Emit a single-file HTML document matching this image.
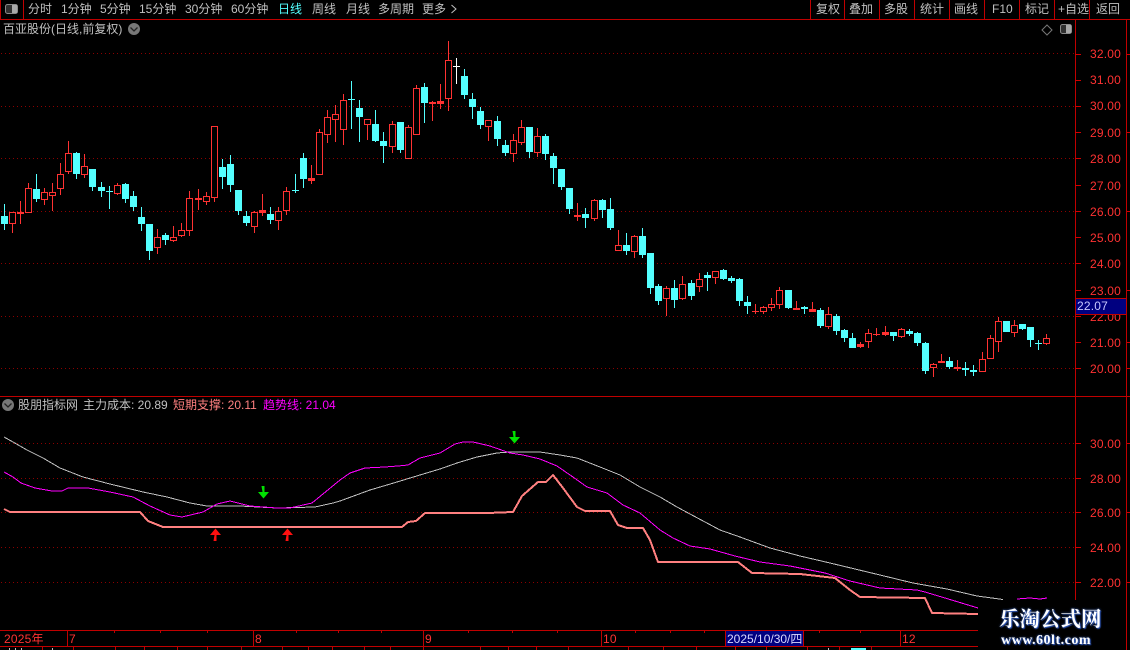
<!DOCTYPE html>
<html><head><meta charset="utf-8"><style>
html,body{margin:0;padding:0;background:#000;width:1130px;height:650px;overflow:hidden}
#r{position:relative;width:1130px;height:650px;background:#000;overflow:hidden;font:12px/14px "Liberation Sans","WenQuanYi Zen Hei","Noto Sans CJK SC",sans-serif;color:#c0c0c0}
#r span{position:absolute;white-space:nowrap}
svg{position:absolute;left:0;top:0}
.a{color:#ff3232;letter-spacing:.2px}
</style></head><body><div id="r">
<svg id="s" width="1130" height="650" viewBox="0 0 1130 650" shape-rendering="crispEdges">
<g fill="#c00000">
<rect x="0" y="19" width="1130" height="1"/>
<rect x="0" y="0" width="1" height="19"/>
<rect x="23" y="0" width="1" height="19"/>
<rect x="810" y="0" width="1" height="19"/><rect x="844" y="0" width="1" height="19"/><rect x="879" y="0" width="1" height="19"/><rect x="914" y="0" width="1" height="19"/><rect x="949" y="0" width="1" height="19"/><rect x="984" y="0" width="1" height="19"/><rect x="1019" y="0" width="1" height="19"/><rect x="1054" y="0" width="1" height="19"/><rect x="1089" y="0" width="1" height="19"/>
<rect x="1075" y="19" width="1" height="631"/>
<rect x="1126" y="19" width="1" height="631"/>
<rect x="0" y="396" width="1130" height="1"/>
<rect x="0" y="630" width="1075" height="1"/>
<rect x="0" y="646" width="1075" height="1"/>
<rect x="67" y="630" width="1" height="16"/><rect x="253" y="630" width="1" height="16"/><rect x="423" y="630" width="1" height="16"/><rect x="601" y="630" width="1" height="16"/><rect x="900" y="630" width="1" height="16"/>
<rect x="114" y="631" width="1" height="2"/><rect x="160" y="631" width="1" height="2"/><rect x="207" y="631" width="1" height="2"/><rect x="296" y="631" width="1" height="2"/><rect x="338" y="631" width="1" height="2"/><rect x="381" y="631" width="1" height="2"/><rect x="468" y="631" width="1" height="2"/><rect x="512" y="631" width="1" height="2"/><rect x="557" y="631" width="1" height="2"/><rect x="635" y="631" width="1" height="2"/><rect x="670" y="631" width="1" height="2"/><rect x="704" y="631" width="1" height="2"/><rect x="819" y="631" width="1" height="2"/><rect x="860" y="631" width="1" height="2"/>
<rect x="42" y="646" width="1" height="4"/><rect x="73" y="646" width="1" height="4"/><rect x="115" y="646" width="1" height="4"/><rect x="144" y="646" width="1" height="4"/><rect x="177" y="646" width="1" height="4"/><rect x="207" y="646" width="1" height="4"/><rect x="241" y="646" width="1" height="4"/><rect x="282" y="646" width="1" height="4"/><rect x="308" y="646" width="1" height="4"/><rect x="332" y="646" width="1" height="4"/><rect x="364" y="646" width="1" height="4"/><rect x="390" y="646" width="1" height="4"/><rect x="423" y="646" width="1" height="4"/><rect x="480" y="646" width="1" height="4"/><rect x="508" y="646" width="1" height="4"/><rect x="536" y="646" width="1" height="4"/><rect x="568" y="646" width="1" height="4"/><rect x="628" y="646" width="1" height="4"/><rect x="663" y="646" width="1" height="4"/><rect x="696" y="646" width="1" height="4"/><rect x="735" y="646" width="1" height="4"/><rect x="766" y="646" width="1" height="4"/><rect x="807" y="646" width="1" height="4"/><rect x="839" y="646" width="1" height="4"/><rect x="871" y="646" width="1" height="4"/>
</g>
<g fill="#c0c0c0">
<rect x="9" y="648" width="1" height="2"/><rect x="15" y="648" width="1" height="2"/><rect x="21" y="648" width="1" height="2"/><rect x="52" y="648" width="1" height="2"/><rect x="828" y="648" width="1" height="2"/>
</g>
<rect x="851" y="648" width="15" height="2" fill="#54ffff"/>
<g fill="#d00000">
<rect x="1075" y="54" width="6" height="1"/><rect x="1075" y="80" width="6" height="1"/><rect x="1075" y="106" width="6" height="1"/><rect x="1075" y="132" width="6" height="1"/><rect x="1075" y="158" width="6" height="1"/><rect x="1075" y="185" width="6" height="1"/><rect x="1075" y="211" width="6" height="1"/><rect x="1075" y="237" width="6" height="1"/><rect x="1075" y="263" width="6" height="1"/><rect x="1075" y="290" width="6" height="1"/><rect x="1075" y="316" width="6" height="1"/><rect x="1075" y="342" width="6" height="1"/><rect x="1075" y="368" width="6" height="1"/>
<rect x="1075" y="443" width="6" height="1"/><rect x="1075" y="478" width="6" height="1"/><rect x="1075" y="512" width="6" height="1"/><rect x="1075" y="547" width="6" height="1"/><rect x="1075" y="582" width="6" height="1"/>
<rect x="1127" y="54" width="3" height="1"/><rect x="1127" y="132" width="3" height="1"/><rect x="1127" y="211" width="3" height="1"/><rect x="1127" y="290" width="3" height="1"/><rect x="1127" y="342" width="3" height="1"/><rect x="1127" y="368" width="3" height="1"/><rect x="1127" y="443" width="3" height="1"/><rect x="1127" y="512" width="3" height="1"/><rect x="1127" y="582" width="3" height="1"/>
</g>
<g stroke="#8c0000" stroke-width="1" stroke-dasharray="1 3" fill="none">
<path d="M1 53.5H1075M1 106.5H1075M1 158.5H1075M1 211.5H1075M1 263.5H1075M1 316.5H1075M1 368.5H1075M1 443.5H1075M1 478.5H1075M1 512.5H1075M1 547.5H1075M1 582.5H1075"/>
</g>
<g id="c"></g>
<g fill="none" stroke-linejoin="round">
<polyline stroke="#c0c0c0" stroke-width="1" points="4,437 13,442 27,450 43,458 60,468 83,477 110,484 143,492 167,497 190,503 207,506 240,506 277,508 315,507 333,503 340,501 370,490 397,482 420,475 440,469 457,463 477,457 497,453 510,452 540,452 560,455 577,458 600,467 620,475 640,487 660,497 677,507 690,514 720,530 740,537 770,548 800,556 830,563 855,569 880,575 913,583 947,589 977,596 1003,599.500"/>
<polyline stroke="#ff00ff" stroke-width="1" points="4,472 13,477 21,483 35,488 52,491 62,491 68,488 88,488 110,492 133,497 150,506 170,515 182,517 203,512 217,504 230,501 250,506 277,508 290,508 312,503 340,480 350,473 365,468 385,467 398,466 408,465 420,458 440,453 455,444 463,442 473,442 490,446 510,453 523,455 540,459 557,466 573,477 587,487 607,493 623,505 640,513 660,530 673,538 690,546 710,549 735,556 760,562 790,566 825,573 850,581 880,588 917,590 925,592 945,598 978,608"/>
<polyline stroke="#ff00ff" stroke-width="1" points="1017,599 1030,598 1040,599 1047,598"/>
<polyline stroke="#ff8080" stroke-width="2" points="4,509 10,512 140,512 148,521 163,527 402,527 408,522 416,521 425,513 488,513 513,512 522,496 538,482 546,482 553,475 563,488 577,507 585,511 610,511 618,525 627,528 643,528 650,540 658,562 738,562 752,573 800,574 835,578 850,590 860,597 925,598 932,613 978,614"/>
</g>
<g shape-rendering="auto">
<path d="M261.500 486h3v6h4.500l-5.500 6.500-5.500-6.500h4.500z" fill="#00e000"/>
<path d="M512.500 431h3v6h4.500l-5.500 6.500-5.500-6.500h4.500z" fill="#00e000"/>
<path d="M213.500 541h3v-6h4.500l-5.500-6.500-5.500 6.500h4.500z" fill="#ff1010"/>
<path d="M285.500 541h3v-6h4.500l-5.500-6.500-5.500 6.500h4.500z" fill="#ff1010"/>
<rect x="5.500" y="4.500" width="12" height="9" rx="2" fill="#303030" stroke="#8a8a8a"/>
<rect x="12" y="5" width="5" height="8" fill="#a8a8a8"/>
<rect x="1060.500" y="24.500" width="11" height="9" rx="2" fill="#303030" stroke="#8a8a8a"/>
<rect x="1066" y="25" width="5" height="8" fill="#a8a8a8"/>
<path d="M1047 25l5 5-5 5-5-5z" fill="none" stroke="#777"/>
<circle cx="134" cy="29" r="6" fill="#777"/><path d="M130.500 27.500l3.500 3.500 3.500-3.500" fill="none" stroke="#222" stroke-width="1.300"/>
<circle cx="8" cy="405" r="6" fill="#777"/><path d="M4.500 403.500l3.500 3.500 3.500-3.500" fill="none" stroke="#222" stroke-width="1.300"/>
<path d="M451.500 5l4.500 4-4.500 4" fill="none" stroke="#c0c0c0"/>
</g>
<rect x="725" y="631" width="78" height="15" fill="#000080"/>
<rect x="725" y="630" width="1" height="16" fill="#c00000"/><rect x="803" y="630" width="1" height="16" fill="#c00000"/>
<rect x="978" y="600" width="148" height="50" fill="#000"/>
<rect x="1075" y="600" width="51" height="50" fill="#000"/>
</svg>

<span style="left:28px;top:2px">分时</span>
<span style="left:61px;top:2px">1分钟</span>
<span style="left:100px;top:2px">5分钟</span>
<span style="left:139px;top:2px">15分钟</span>
<span style="left:185px;top:2px">30分钟</span>
<span style="left:231px;top:2px">60分钟</span>
<span style="left:278px;top:2px;color:#54ffff">日线</span>
<span style="left:312px;top:2px">周线</span>
<span style="left:346px;top:2px">月线</span>
<span style="left:378px;top:2px">多周期</span>
<span style="left:422px;top:2px">更多</span>
<span style="left:816px;top:2px">复权</span>
<span style="left:849px;top:2px">叠加</span>
<span style="left:884px;top:2px">多股</span>
<span style="left:920px;top:2px">统计</span>
<span style="left:954px;top:2px">画线</span>
<span style="left:992px;top:2px">F10</span>
<span style="left:1025px;top:2px">标记</span>
<span style="left:1058px;top:2px">+自选</span>
<span style="left:1096px;top:2px">返回</span>
<span style="left:3px;top:22px">百亚股份(日线,前复权)</span>

<span class="a" style="left:1090px;top:47px">32.00</span>
<span class="a" style="left:1090px;top:73px">31.00</span>
<span class="a" style="left:1090px;top:99px">30.00</span>
<span class="a" style="left:1090px;top:126px">29.00</span>
<span class="a" style="left:1090px;top:152px">28.00</span>
<span class="a" style="left:1090px;top:179px">27.00</span>
<span class="a" style="left:1090px;top:205px">26.00</span>
<span class="a" style="left:1090px;top:231px">25.00</span>
<span class="a" style="left:1090px;top:257px">24.00</span>
<span class="a" style="left:1090px;top:284px">23.00</span>
<span class="a" style="left:1090px;top:310px">22.00</span>
<span class="a" style="left:1090px;top:336px">21.00</span>
<span class="a" style="left:1090px;top:362px">20.00</span>
<span style="left:1076px;top:298px;width:49px;height:15px;padding-left:1px;background:#000080;border-top:1px solid #c00000;border-bottom:1px solid #c00000;color:#c8c8ff;letter-spacing:.2px">22.07</span>

<span style="left:18px;top:398px">股朋指标网</span>
<span style="left:83px;top:398px">主力成本: 20.89</span>
<span style="left:173px;top:398px;color:#ff8080">短期支撑: 20.11</span>
<span style="left:263px;top:398px;color:#ff00ff">趋势线: 21.04</span>

<span class="a" style="left:1090px;top:437px">30.00</span>
<span class="a" style="left:1090px;top:472px">28.00</span>
<span class="a" style="left:1090px;top:506px">26.00</span>
<span class="a" style="left:1090px;top:541px">24.00</span>
<span class="a" style="left:1090px;top:576px">22.00</span>

<span class="a" style="left:4px;top:632px">2025年</span>
<span class="a" style="left:69px;top:632px">7</span>
<span class="a" style="left:255px;top:632px">8</span>
<span class="a" style="left:425px;top:632px">9</span>
<span class="a" style="left:603px;top:632px">10</span>
<span class="a" style="left:902px;top:632px">12</span>
<span style="left:727px;top:632px;color:#d8d8ff">2025/10/30/四</span>

<span style="left:999px;top:605px;color:#fff;font:bold 20.500px/24px 'Noto Serif CJK SC',serif;text-shadow:0 0 2px #3a6ad0,1px 1px 1px #2a50b0">乐淘公式网</span>
<span style="left:1001px;top:633px;color:#fff;font:bold 14px/16px 'Liberation Serif',serif;letter-spacing:.5px;text-shadow:0 0 2px #3a6ad0,1px 1px 1px #2a50b0">www.60lt.com</span>

<script>
(function(){
var d=[];
function g(b,l){l.forEach(function(a){d.push([b+a[0]/3,b+a[1]/3,b+a[2]/3,b+a[3]/3,a[4]]);});}
g(120,[[252,330,288,312,'c'],[276,338,277,311,'r'],[243,312,277,281,'r'],[190,278,205,278,'r'],[162,246,207,237,'c'],[205,255,217,239,'r'],[190,273,217,227,'r'],[130,225,163,206,'r'],[64,162,100,155,'r'],[96,177,99,162,'c'],[102,174,139,164,'r'],[147,213,147,201,'c'],[186,231,201,213,'c'],[198,267,213,215,'c'],[190,225,196,221,'r'],[190,249,192,237,'c'],[213,273,228,261,'c'],[262,333,291,312,'c'],[312,420,312,393,'c'],[327,402,352,383,'r'],[339,375,345,360,'c'],[318,366,352,362,'r'],[309,351,331,347,'r'],[213,348,235,332,'r'],[207,270,235,239,'r'],[216,255,229,245,'r'],[18,246,19,233,'r'],[117,207,141,171,'c'],[105,216,132,195,'c'],[210,285,210,273,'c'],[273,318,288,309,'c'],[273,339,277,320,'r'],[222,288,271,278,'r'],[261,312,282,300,'c'],[261,330,274,302,'r']]);
g(0,[[561,645,573,633,'r'],[522,579,570,573,'c'],[459,564,474,537,'c'],[495,552,534,543,'r']]);
g(35,[[282,420,292,419,'r'],[225,324,247,299,'r'],[210,321,238,254,'r'],[177,330,196,284,'r'],[138,282,192,194,'c'],[195,321,219,246,'c'],[253,315,253,269,'r'],[225,321,267,318,'c'],[291,384,318,333,'c'],[258,354,268,335,'r'],[261,354,261,345,'c'],[270,372,277,371,'r'],[150,299,160,299,'r'],[144,264,156,204,'c'],[198,258,202,206,'r'],[147,222,198,206,'r'],[18,228,76,191,'r'],[69,147,93,95,'w'],[102,192,123,180,'c'],[174,252,192,216,'c'],[216,282,228,270,'c'],[255,318,256,275,'r'],[243,333,258,312,'c'],[315,363,330,354,'c'],[297,381,316,356,'r'],[255,330,277,323,'r'],[276,369,276,351,'c'],[279,366,304,353,'r'],[297,375,303,357,'c'],[354,447,363,399,'c']]);
g(0,[[507,570,507,561,'c']]);
g(170,[[54,132,54,117,'c'],[99,153,135,140,'r'],[114,174,132,144,'c'],[87,153,91,147,'r'],[87,144,90,120,'c'],[84,180,117,174,'c'],[180,243,226,242,'r'],[189,255,225,243,'c'],[195,264,198,245,'r'],[174,264,198,255,'c'],[249,372,249,354,'c'],[342,405,348,393,'c'],[348,438,355,387,'r'],[330,414,354,390,'c'],[318,390,343,387,'r'],[330,390,339,378,'c'],[309,366,328,350,'r'],[306,363,315,324,'c'],[304,342,304,323,'r'],[297,330,300,327,'c'],[318,339,324,333,'c'],[324,408,327,393,'c'],[378,432,396,408,'c'],[402,432,424,426,'r'],[408,432,412,425,'r'],[384,423,403,413,'r'],[351,417,361,404,'r'],[360,417,360,414,'c'],[393,420,414,419,'r'],[408,432,411,417,'c'],[396,426,418,425,'r'],[414,474,420,468,'c'],[411,477,433,471,'r']]);
g(290,[[72,134,78,122,'c'],[117,156,120,144,'c'],[129,174,144,174,'c'],[156,174,162,171,'r'],[117,174,130,157,'r'],[114,138,132,136,'r'],[108,138,127,136,'r'],[126,153,126,138,'c'],[114,144,118,142,'r'],[117,138,123,132,'c'],[126,168,129,159,'c'],[156,252,159,243,'c'],[220,261,221,233,'r'],[192,219,214,218,'r'],[201,237,213,231,'c'],[210,243,232,236,'r'],[216,258,234,240,'c'],[225,258,240,246,'c'],[186,246,208,245,'r'],[135,207,145,206,'r'],[81,186,94,157,'r'],[93,126,93,126,'c'],[90,141,106,128,'r'],[102,120,102,117,'c'],[111,171,111,150,'c'],[150,180,159,162,'c'],[132,165,145,163,'r']]);
var col={r:'#ff3232',c:'#54ffff',w:'#ffffff'},h='';
d.forEach(function(a,i){
 var x=4+8*i+Math.floor((i-(i>=60?1:0))/12),t=Math.round(a[2]),b=Math.round(a[3]),hi=Math.round(a[0]),lo=Math.round(a[1]),c=col[a[4]];
 if(b<=t)b=t+1;
 h+='<rect x="'+x+'" y="'+hi+'" width="1" height="'+Math.max(lo-hi,1)+'" fill="'+c+'"/>';
 if(a[4]=='r'&&b-t>3){h+='<rect x="'+(x-3)+'.5" y="'+t+'.5" width="6" height="'+(b-t-1)+'" fill="#000" stroke="'+c+'" stroke-width="1"/>';}
 else{h+='<rect x="'+(x-3)+'" y="'+t+'" width="7" height="'+(b-t)+'" fill="'+c+'"/>';}
});
document.getElementById('c').innerHTML=h;
})();
</script>
</div></body></html>
